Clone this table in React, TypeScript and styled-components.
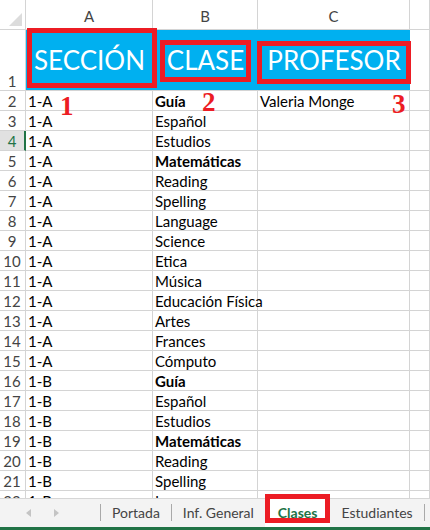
import React from "react";
import styled, { createGlobalStyle } from "styled-components";

const Global = createGlobalStyle`
  html, body { margin: 0; padding: 0; background: #fff; }
  body { font-family: Lato, "Open Sans", sans-serif; }
`;

const GRID = "#d4d4d4";
const GREEN = "#217346";
const RED = "#ec1c24";
const COLS = "26px 127px 105px 152px 1fr";

const Window = styled.div`
  width: 430px;
  height: 530px;
  display: flex;
  flex-direction: column;
  overflow: hidden;
  background: #fff;
`;

const SheetArea = styled.div`
  flex: 1;
  overflow: hidden;
`;

const Grid = styled.div`
  display: grid;
  grid-template-columns: ${COLS};
  grid-template-rows: 30px 61px;
  grid-auto-rows: 20px;
`;

const Corner = styled.div`
  box-sizing: border-box;
  border-right: 1px solid ${GRID};
  border-bottom: 1px solid ${GRID};
  position: relative;
  &::after {
    content: "";
    position: absolute;
    right: 3px;
    bottom: 3px;
    width: 0;
    height: 0;
    border-left: 13px solid transparent;
    border-bottom: 13px solid #dcdcdc;
  }
`;

const ColHead = styled.div`
  box-sizing: border-box;
  border-right: 1px solid ${GRID};
  border-bottom: 1px solid ${GRID};
  display: flex;
  align-items: center;
  justify-content: center;
  padding-top: 2px;
  font-size: 15px;
  color: #444;
`;

const RowHead = styled.div<{ $selected?: boolean }>`
  box-sizing: border-box;
  border-bottom: 1px solid ${GRID};
  border-right: ${(p) => (p.$selected ? `2px solid ${GREEN}` : `1px solid ${GRID}`)};
  background: ${(p) => (p.$selected ? "#e1e1e1" : "#fff")};
  color: ${(p) => (p.$selected ? GREEN : "#444")};
  font-size: 15px;
  display: flex;
  align-items: flex-end;
  justify-content: center;
  line-height: 18px;
  padding-right: ${(p) => (p.$selected ? 0 : 1)}px;
`;

const TitleBand = styled.div`
  grid-column: 2 / 5;
  box-sizing: border-box;
  border-bottom: 1px solid ${GRID};
  background: #00b0f0;
  display: grid;
  grid-template-columns: 127px 105px 152px;
  position: relative;
`;

const TitleCell = styled.div`
  display: flex;
  align-items: center;
  justify-content: center;
  color: #fff;
  font-size: 26px;
  line-height: 1;
  padding-bottom: 1px;
  white-space: nowrap;
`;

const Callout = styled.div<{ $x: number; $y: number; $w: number; $h: number }>`
  position: absolute;
  left: ${(p) => p.$x}px;
  top: ${(p) => p.$y}px;
  width: ${(p) => p.$w}px;
  height: ${(p) => p.$h}px;
  box-sizing: border-box;
  border: 5px solid ${RED};
  pointer-events: none;
`;

const Cell = styled.div<{ $bold?: boolean }>`
  box-sizing: border-box;
  border-right: 1px solid ${GRID};
  border-bottom: 1px solid ${GRID};
  font-size: 15px;
  line-height: 18px;
  color: #000;
  font-weight: ${(p) => (p.$bold ? 700 : 400)};
  padding-left: 2px;
  white-space: nowrap;
  display: flex;
  align-items: flex-end;
  position: relative;
`;

const Marker = styled.span<{ $x: number; $y: number }>`
  position: absolute;
  left: ${(p) => p.$x}px;
  top: ${(p) => p.$y}px;
  font-family: "Liberation Serif", "DejaVu Serif", serif;
  font-weight: 700;
  font-size: 27px;
  line-height: 1;
  color: ${RED};
  z-index: 2;
`;

const TabBar = styled.div`
  height: 29px;
  flex: none;
  background: #f3f3f3;
  border-top: 1px solid #d6d6d6;
  box-sizing: border-box;
  display: flex;
  align-items: stretch;
  font-size: 14px;
  color: #444;
  white-space: nowrap;
`;

const Nav = styled.div`
  width: 100px;
  flex: none;
  display: flex;
  align-items: center;
  padding-left: 26px;
  gap: 23px;
  box-sizing: border-box;
`;

const Arrow = styled.span<{ $dir: "left" | "right" }>`
  width: 0;
  height: 0;
  border-top: 4px solid transparent;
  border-bottom: 4px solid transparent;
  ${(p) =>
    p.$dir === "left"
      ? "border-right: 5px solid #c4c4c4;"
      : "border-left: 5px solid #c4c4c4;"}
`;

const Divider = styled.span`
  flex: none;
  width: 1px;
  background: #a9a9a9;
  margin: 5px 0 6px;
`;

const Tab = styled.div<{ $active?: boolean }>`
  flex: none;
  display: flex;
  align-items: center;
  padding: 0 ${(p) => (p.$active ? 13 : 11)}px 2px;
  position: relative;
  background: ${(p) => (p.$active ? "#fff" : "transparent")};
  color: ${(p) => (p.$active ? GREEN : "#444")};
  font-weight: ${(p) => (p.$active ? 700 : 400)};
  ${(p) =>
    p.$active
      ? `&::after {
    content: "";
    position: absolute;
    left: 0; right: 0; top: -5px; bottom: 4px;
    border: 5px solid ${RED};
  }`
      : ""}
`;

const Stripe = styled.div`
  height: 3px;
  flex: none;
  background: ${GREEN};
`;

type Row = [string, string, boolean?];

const rows: Row[] = [
  ["1-A", "Guía", true],
  ["1-A", "Español"],
  ["1-A", "Estudios"],
  ["1-A", "Matemáticas", true],
  ["1-A", "Reading"],
  ["1-A", "Spelling"],
  ["1-A", "Language"],
  ["1-A", "Science"],
  ["1-A", "Etica"],
  ["1-A", "Música"],
  ["1-A", "Educación Física"],
  ["1-A", "Artes"],
  ["1-A", "Frances"],
  ["1-A", "Cómputo"],
  ["1-B", "Guía", true],
  ["1-B", "Español"],
  ["1-B", "Estudios"],
  ["1-B", "Matemáticas", true],
  ["1-B", "Reading"],
  ["1-B", "Spelling"],
  ["1-B", "Language"],
];

export default function App() {
  return (
    <>
      <Global />
      <Window>
        <SheetArea>
          <Grid>
            <Corner />
            <ColHead>A</ColHead>
            <ColHead>B</ColHead>
            <ColHead>C</ColHead>
            <ColHead />

            <RowHead>1</RowHead>
            <TitleBand>
              <TitleCell>SECCIÓN</TitleCell>
              <TitleCell>CLASE</TitleCell>
              <TitleCell>PROFESOR</TitleCell>
              <Callout $x={1} $y={-2} $w={130} $h={60} />
              <Callout $x={134} $y={10} $w={91} $h={42} />
              <Callout $x={231} $y={11} $w={154} $h={43} />
            </TitleBand>
            <Cell />

            {rows.map(([sec, cls, bold], i) => {
              const n = i + 2;
              return (
                <React.Fragment key={n}>
                  <RowHead $selected={n === 4}>{n}</RowHead>
                  <Cell>
                    {sec}
                    {n === 2 && <Marker $x={34} $y={2}>1</Marker>}
                  </Cell>
                  <Cell $bold={bold}>
                    {cls}
                    {n === 2 && <Marker $x={49} $y={-2}>2</Marker>}
                  </Cell>
                  <Cell>
                    {n === 2 ? "Valeria Monge" : ""}
                    {n === 2 && <Marker $x={134} $y={0}>3</Marker>}
                  </Cell>
                  <Cell />
                </React.Fragment>
              );
            })}
          </Grid>
        </SheetArea>
        <TabBar>
          <Nav>
            <Arrow $dir="left" />
            <Arrow $dir="right" />
          </Nav>
          <Divider />
          <Tab>Portada</Tab>
          <Divider />
          <Tab>Inf. General</Tab>
          <Tab $active>Clases</Tab>
          <Tab>Estudiantes</Tab>
          <Divider />
        </TabBar>
        <Stripe />
      </Window>
    </>
  );
}
